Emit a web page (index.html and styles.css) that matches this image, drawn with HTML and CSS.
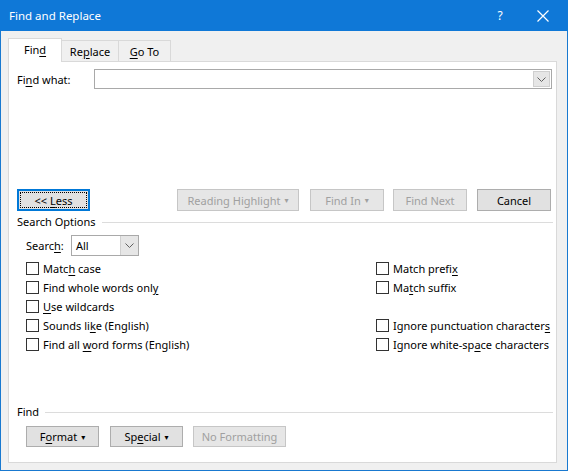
FILE: index.html
```html
<!DOCTYPE html>
<html>
<head>
<meta charset="utf-8">
<link rel="stylesheet" href="styles.css">
</head>
<body>
<div class="window">
  <div class="titlebar">
    <span class="title">Find and Replace</span>
    <span class="help">?</span>
    <span class="close"><svg width="12" height="12" viewBox="0 0 12 12"><path d="M0.5 0.5L11.5 11.5M11.5 0.5L0.5 11.5" stroke="#fff" stroke-width="1.2" fill="none"/></svg></span>
  </div>
  <div class="client">
    <div class="tabs">
      <div class="tab tab-active"><span>Fin<u>d</u></span></div>
      <div class="tab tab-w1"><span>Re<u>p</u>lace</span></div>
      <div class="tab tab-w2"><span><u>G</u>o To</span></div>
    </div>
    <div class="panel">
      <div class="find-row">
        <label class="find-label">Fi<u>n</u>d what:</label>
        <div class="combo">
          <div class="combo-text"></div>
          <div class="combo-btn"><svg width="9" height="5" viewBox="0 0 9 5"><polyline points="0.5,0.5 4.5,4.5 8.5,0.5" fill="none" stroke="#606060" stroke-width="1"/></svg></div>
        </div>
      </div>
      <div class="btn-row">
        <button class="btn btn-less"><span class="focus"><span>&lt;&lt; <u>L</u>ess</span></span></button>
        <button class="btn btn-disabled btn-rh"><span>Reading Highlight</span><span class="caret">▾</span></button>
        <button class="btn btn-disabled btn-fi"><span>Find In</span><span class="caret">▾</span></button>
        <button class="btn btn-disabled btn-fn"><span>Find Next</span></button>
        <button class="btn btn-cancel"><span>Cancel</span></button>
      </div>
      <div class="group-head"><span>Search Options</span><div class="rule"></div></div>
      <div class="search-row">
        <span class="search-label">Searc<u>h</u>:</span>
        <div class="select">
          <div class="select-text">All</div>
          <div class="select-btn"><svg width="9" height="5" viewBox="0 0 9 5"><polyline points="0.5,0.5 4.5,4.5 8.5,0.5" fill="none" stroke="#606060" stroke-width="1"/></svg></div>
        </div>
      </div>
      <div class="checks">
        <div class="check"><span class="box"></span><span>Matc<u>h</u> case</span></div>
        <div class="check"><span class="box"></span><span>Match prefi<u>x</u></span></div>
        <div class="check"><span class="box"></span><span>Find whole words onl<u>y</u></span></div>
        <div class="check"><span class="box"></span><span>Ma<u>t</u>ch suffix</span></div>
        <div class="check"><span class="box"></span><span><u>U</u>se wildcards</span></div>
        <div class="check"></div>
        <div class="check"><span class="box"></span><span>Sounds li<u>k</u>e (English)</span></div>
        <div class="check"><span class="box"></span><span>Ignore punctuation character<u>s</u></span></div>
        <div class="check"><span class="box"></span><span>Find all <u>w</u>ord forms (English)</span></div>
        <div class="check"><span class="box"></span><span>Ignore white-sp<u>a</u>ce characters</span></div>
      </div>
      <div class="group-head group-find"><span>Find</span><div class="rule"></div></div>
      <div class="fmt-row">
        <button class="btn btn-small btn-fmt"><span>F<u>o</u>rmat</span><span class="caret">▾</span></button>
        <button class="btn btn-small btn-sp"><span>Sp<u>e</u>cial</span><span class="caret">▾</span></button>
        <button class="btn btn-small btn-disabled btn-nf"><span>No Formatting</span></button>
      </div>
    </div>
  </div>
</div>
</body>
</html>
```
FILE: styles.css
```css
html, body {
  margin: 0;
  padding: 0;
}
body {
  font-family: "Noto Sans", "DejaVu Sans", sans-serif;
  font-size: 11px;
  color: #000;
  width: 568px;
  height: 471px;
  overflow: hidden;
}
u {
  text-decoration: underline;
  text-underline-offset: 2px;
}
.window {
  width: 568px;
  height: 471px;
  box-sizing: border-box;
  background: #1979d0;
  padding: 0 1px 1px 1px;
  display: flex;
  flex-direction: column;
}
.titlebar {
  height: 31px;
  margin: 0 -1px;
  background: #0f78d7;
  color: #fff;
  display: flex;
  align-items: center;
  flex-shrink: 0;
}
.title {
  padding-left: 9px;
  font-size: 11.5px;
  flex: 1;
}
.help {
  width: 20px;
  text-align: center;
  font-size: 12px;
  margin-right: 27px;
}
.close {
  width: 12px;
  height: 12px;
  margin-right: 19px;
  display: flex;
}
.client {
  flex: 1;
  background: #f0f0f0;
  padding: 7px 0 0 7px;
  display: flex;
  flex-direction: column;
}
.tabs {
  display: flex;
  align-items: flex-end;
  height: 23px;
  position: relative;
  z-index: 1;
}
.tab {
  height: 21px;
  box-sizing: border-box;
  border: 1px solid #d9d9d9;
  border-left: none;
  border-bottom: none;
  background: #f0f0f0;
  display: flex;
  align-items: center;
  justify-content: center;
  line-height: 1;
  padding-top: 1px;
}
.tab-active {
  width: 54px;
  border-left: 1px solid #d9d9d9;
  background: #fff;
  margin-bottom: -1px;
  height: 24px;
  padding-top: 0;
  padding-bottom: 2px;
}
.tab-w1 {
  width: 57px;
}
.tab-w2 {
  width: 52px;
}
.panel {
  width: 549px;
  height: 402px;
  box-sizing: border-box;
  border: 1px solid #d9d9d9;
  background: #fff;
  padding: 0 3px 0 8px;
  display: flex;
  flex-direction: column;
}
.find-row {
  margin-top: 7px;
  height: 20px;
  display: flex;
  align-items: center;
}
.find-label {
  width: 77px;
}
.combo {
  width: 458px;
  height: 20px;
  box-sizing: border-box;
  border: 1px solid #a9a9a9;
  display: flex;
  background: #fff;
}
.combo-text {
  flex: 1;
}
.combo-btn {
  width: 17px;
  margin: 1px;
  background: #e6e6e6;
  border: 1px solid #cfcfcf;
  box-sizing: border-box;
  display: flex;
  align-items: center;
  justify-content: center;
}
.btn-row {
  margin-top: 100px;
  height: 22px;
  display: flex;
}
.btn {
  font-family: inherit;
  font-size: 11px;
  height: 22px;
  box-sizing: border-box;
  background: #e1e1e1;
  border: 1px solid #adadad;
  color: #000;
  padding: 0;
  margin: 0;
  display: flex;
  align-items: center;
  justify-content: center;
  line-height: 1;
}
.btn-disabled {
  color: #a0a0a0;
  border-color: #c6c6c6;
  background: #e6e6e6;
}
.caret {
  font-size: 8px;
  margin-left: 4px;
}
.btn-less {
  width: 73px;
  border: 1px solid #0078d7;
  padding: 1px;
  box-shadow: inset 0 0 0 1px #0078d7;
}
.focus {
  flex: 1;
  align-self: stretch;
  display: flex;
  align-items: center;
  justify-content: center;
  outline: 1px dotted #000;
  outline-offset: -1px;
  margin: 1px;
}
.btn-rh {
  width: 122px;
  margin-left: 87px;
}
.btn-fi {
  width: 74px;
  margin-left: 11px;
}
.btn-fn {
  width: 74px;
  margin-left: 9px;
}
.btn-cancel {
  width: 74px;
  margin-left: 10px;
}
.group-head {
  margin-top: 2px;
  height: 16px;
  display: flex;
  align-items: center;
}
.group-head span {
  margin-right: 6px;
}
.rule {
  flex: 1;
  height: 1px;
  background: #dcdcdc;
  margin-top: 2px;
}
.search-row {
  margin-top: 6px;
  margin-left: 9px;
  height: 21px;
  display: flex;
  align-items: center;
}
.search-label {
  width: 45px;
}
.select {
  width: 68px;
  height: 21px;
  box-sizing: border-box;
  border: 1px solid #a9a9a9;
  display: flex;
  background: #fff;
}
.select-text {
  flex: 1;
  padding-left: 4px;
  display: flex;
  align-items: center;
}
.select-btn {
  width: 17px;
  background: #e6e6e6;
  border-left: 1px solid #cfcfcf;
  display: flex;
  align-items: center;
  justify-content: center;
}
.checks {
  margin-top: 3px;
  margin-left: 9px;
  display: grid;
  grid-template-columns: 350px 1fr;
  grid-auto-rows: 19px;
}
.check {
  display: flex;
  align-items: center;
  white-space: nowrap;
}
.box {
  width: 13px;
  height: 13px;
  box-sizing: border-box;
  border: 1px solid #333;
  background: #fff;
  margin-right: 4px;
  flex-shrink: 0;
}
.group-find {
  margin-top: 49px;
}
.fmt-row {
  margin-top: 7px;
  margin-left: 9px;
  display: flex;
}
.btn-small {
  height: 21px;
}
.btn-fmt {
  width: 73px;
}
.btn-sp {
  width: 73px;
  margin-left: 11px;
}
.btn-nf {
  width: 93px;
  margin-left: 10px;
}
```
